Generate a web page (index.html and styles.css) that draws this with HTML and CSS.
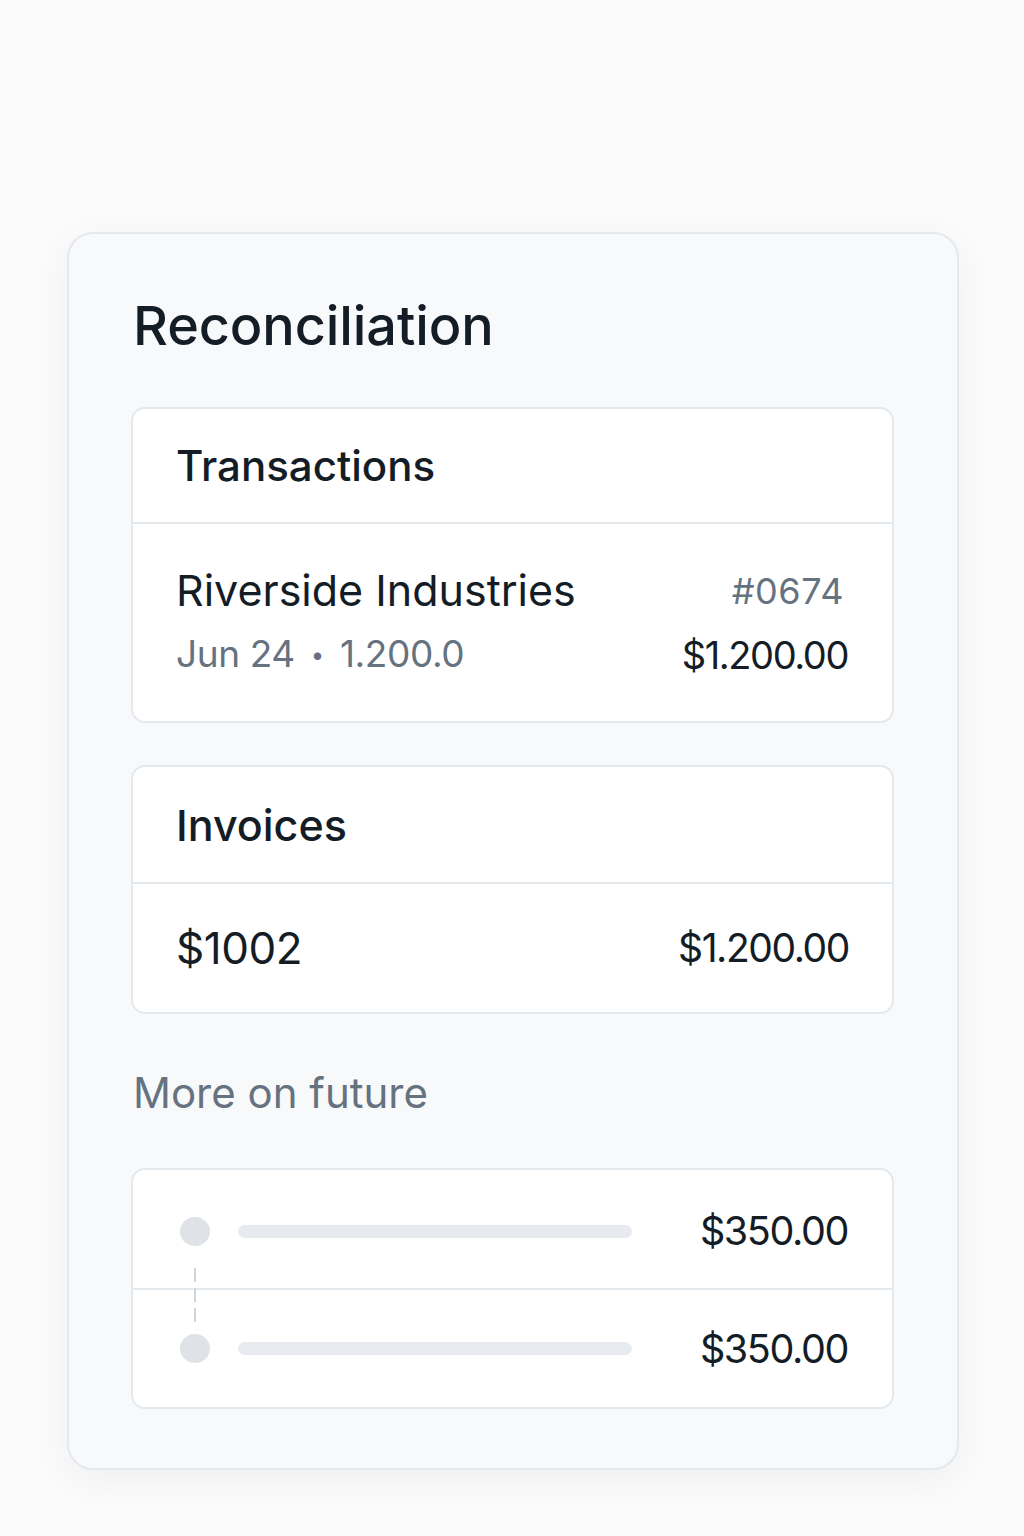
FILE: index.html
```html
<!DOCTYPE html>
<html lang="en">
<head>
  <meta charset="UTF-8">
  <meta name="viewport" content="width=device-width, initial-scale=1.0">
  <title>Reconciliation</title>
  <link rel="stylesheet" href="styles.css">
</head>
<body>
  <div class="panel">
    <h1>Reconciliation</h1>

    <div class="box">
      <div class="box-head">Transactions</div>
      <div class="tx-row">
        <div class="tx-left">
          <div class="tx-name">Riverside Industries</div>
          <div class="tx-meta">Jun 24 <span class="dot-sep">•</span> 1.200.0</div>
        </div>
        <div class="tx-right">
          <div class="tx-ref">#0674</div>
          <div class="amount">$1.200.00</div>
        </div>
      </div>
    </div>

    <div class="box">
      <div class="box-head box-head-inv">Invoices</div>
      <div class="inv-row">
        <span class="inv-no">$1002</span>
        <span class="amount">$1.200.00</span>
      </div>
    </div>

    <div class="section-label">More on future</div>

    <div class="box last">
      <div class="fut-row first">
        <span class="fut-dot"></span>
        <span class="fut-bar"></span>
        <span class="amount">$350.00</span>
      </div>
      <div class="fut-row">
        <span class="fut-dot"></span>
        <span class="fut-bar"></span>
        <span class="amount">$350.00</span>
      </div>
    </div>
  </div>
</body>
</html>
```

FILE: styles.css
```css
:root {
  --ink: #141c26;
  --muted: #66727f;
  --line: #e4e9ee;
  --panel-bg: #f8f9fb;
  --skeleton: #e7ebef;
}
* { box-sizing: border-box; }
html { background: #fbfbfb; }
body {
  margin: 0;
  min-height: 1536px;
  font-family: Inter, "Noto Sans", sans-serif;
  color: var(--ink);
  padding: 232px 0 0 67px;
}
.panel {
  width: 892px;
  background: var(--panel-bg);
  border: 2px solid var(--line);
  border-radius: 26px;
  padding: 52px 63px 59px 62px;
  box-shadow: 0 10px 40px rgba(0,0,0,0.05);
}
h1 {
  margin: 0 0 41px 2px;
  font-size: 54px;
  font-weight: 500;
  letter-spacing: -0.1px;
  line-height: 80px;
}
.box {
  background: #fff;
  border: 2px solid var(--line);
  border-radius: 14px;
  margin-bottom: 42px;
}
.box.last { margin-bottom: 0; }
.box-head {
  height: 115px;
  display: flex;
  align-items: center;
  padding: 0 43px;
  font-size: 42px;
  font-weight: 500;
  border-bottom: 2px solid var(--line);
}
.box-head-inv { height: 117px; font-size: 43px; }
.tx-row {
  height: 197px;
  display: flex;
  justify-content: space-between;
  align-items: center;
  padding: 0 44px 0 43px;
}
.tx-name { font-size: 43px; line-height: 64px; }
.tx-meta { font-size: 37px; color: var(--muted); letter-spacing: -0.4px; line-height: 64px; }
.dot-sep { font-size: 24px; margin: 0 6px; vertical-align: 4px; }
.tx-right { text-align: right; }
.tx-ref { font-size: 36px; color: var(--muted); letter-spacing: 0.6px; line-height: 64px; margin-right: 4px; }
.amount { font-size: 38px; letter-spacing: -1.4px; line-height: 64px; }
.inv-row {
  height: 128px;
  display: flex;
  justify-content: space-between;
  align-items: center;
  padding: 0 43px 0 43px;
}
.inv-row .amount { font-size: 39px; }
.inv-no { font-size: 44px; letter-spacing: -0.5px; }
.section-label {
  font-size: 42px;
  color: var(--muted);
  margin: 54px 0 50px 2px;
  line-height: 50px;
}
.fut-row {
  height: 117px;
  display: flex;
  align-items: center;
  padding: 0 44px 0 47px;
  position: relative;
}
.fut-row.first {
  height: 120px;
  border-bottom: 2px solid var(--line);
  padding-top: 4px;
}
.fut-dot {
  width: 30px;
  height: 29px;
  border-radius: 50%;
  background: #dfe3e8;
  flex: none;
}
.fut-row.first .fut-dot::after {
  content: "";
  position: absolute;
  left: 61px;
  top: 98px;
  width: 2px;
  height: 54px;
  background: repeating-linear-gradient(to bottom, #cfd5dc 0 14px, transparent 14px 20px);
}
.fut-bar {
  width: 394px;
  height: 13px;
  border-radius: 7px;
  background: var(--skeleton);
  margin-left: 28px;
}
.fut-row .amount { margin-left: auto; font-size: 39.5px; }
```
